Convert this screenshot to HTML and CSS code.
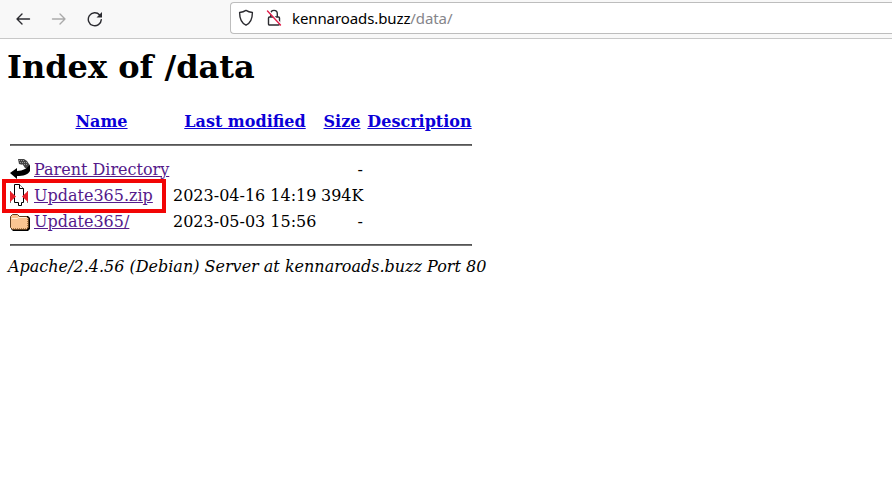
FILE: index.html
```html
<!DOCTYPE html>
<html lang="en">
<head>
<meta charset="utf-8">
<title>Index of /data</title>
<link rel="stylesheet" href="styles.css">
</head>
<body>
<header class="toolbar">
  <nav class="nav-buttons">
    <svg width="16" height="16" viewBox="0 0 16 16"><path d="M14.500 8H2M7 3 2 8l5 5"/></svg>
    <svg class="disabled" width="16" height="16" viewBox="0 0 16 16"><path d="M1.500 8H14M9 3l5 5-5 5"/></svg>
    <svg width="16" height="16" viewBox="0 0 16 16"><path d="M14.300 8.600A6.500 6.500 0 1 1 12.700 4"/><path class="solid" d="M15 1v5.500H9.500z"/></svg>
  </nav>
  <div class="address">
    <svg width="16" height="18" viewBox="0 0 16 18"><path d="M8 1.400c2 1.400 4 1.900 6.400 2.100 0 6.500-1.500 10.400-6.400 12.700C3.100 13.900 1.600 10 1.600 3.500 4 3.300 6 2.800 8 1.400z"/></svg>
    <svg class="lock" width="16" height="18" viewBox="0 0 16 18"><path d="M4.700 8V4.700a3.300 3.300 0 0 1 6.600 0V8M3.500 8h9a1 1 0 0 1 1 1v6a1 1 0 0 1-1 1h-9a1 1 0 0 1-1-1V9a1 1 0 0 1 1-1z"/><path class="halo" d="M2.500 1.500 15 15"/><path class="slash" d="M1.500 2 14.500 16"/></svg>
    <span class="url">kennaroads.buzz<span class="path">/data/</span></span>
  </div>
</header>
<main>
  <h1>Index of /data</h1>
  <table>
    <colgroup><col class="c-icon"><col class="c-name"><col class="c-date"><col class="c-size"><col class="c-desc"></colgroup>
    <tr class="head"><th></th><th><a href="#">Name</a></th><th><a href="#">Last modified</a></th><th><a href="#">Size</a></th><th><a href="#">Description</a></th></tr>
    <tr><th colspan="5"><hr></th></tr>
    <tr>
      <td><svg width="20" height="22" viewBox="0 0 20 22"><path fill="#444" d="M8 1h6l3 2 2 3v4h-4l-2-3-4-1z"/><path stroke="#999" stroke-dasharray="1 1" d="M9 2.500h5M10 4.500h7M12 6.500h6"/><path fill="#000" d="M0 15l7-5v3c6 0 11-3 13-7v7c-2 4-7 5-13 5v3z"/></svg></td>
      <td><a class="visited" href="#">Parent Directory</a></td><td></td><td class="size">-</td><td></td>
    </tr>
    <tr>
      <td class="marked"><svg width="20" height="22" viewBox="0 0 20 22"><path fill="#fff" stroke="#000" d="M4.500.5h5l4 4v14h-2v3h-3v-3h-4z"/><path fill="#fff" stroke="#000" d="M9.500.5v4h4"/><path fill="#777" d="M0 7h1v12H0zM17 7h1v12h-1z"/><path fill="#e82028" d="M0 7v11l6-5.500zM18 7v11l-6-5.500z"/></svg></td>
      <td><a class="visited" href="#">Update365.zip</a></td><td>2023-04-16 14:19</td><td class="size">394K</td><td></td>
    </tr>
    <tr>
      <td><svg width="20" height="22" viewBox="0 0 20 22"><path fill="#000" d="M2 6h16l2 2v11l-2 2H3l-2-2z"/><path fill="#f9c592" stroke="#604020" d="M.5 6.500l2-2h5l2 2h7l2 2v9l-2 2h-14l-2-2z"/><path stroke="#fff0d8" d="M1.500 8.500h6l1-1h8"/><path stroke="#a87848" stroke-dasharray="1 1" d="M17.500 9v9M3 18.500h14"/></svg></td>
      <td><a class="visited" href="#">Update365/</a></td><td>2023-05-03 15:56</td><td class="size">-</td><td></td>
    </tr>
    <tr><th colspan="5"><hr></th></tr>
  </table>
  <address>Apache/2.4.56 (Debian) Server at kennaroads.buzz Port 80</address>
</main>
</body>
</html>
```
FILE: styles.css
```css
body {
  margin: 0;
  background: #fff;
  color: #000;
  font: 16px/19px "DejaVu Serif", serif;
  overflow: hidden;
}
.toolbar {
  box-sizing: border-box;
  display: flex;
  height: 39px;
  padding: 2px 0 4px 15px;
  background: #f8f8f8;
  border-bottom: 1px solid #c8c8c8;
}
.toolbar svg {
  flex: none;
  fill: none;
  stroke: #2b2b30;
  stroke-width: 1.4;
  stroke-linecap: round;
  stroke-linejoin: round;
}
.nav-buttons {
  display: flex;
  align-items: center;
  gap: 20px;
  width: 215px;
  padding-top: 1px;
}
.toolbar .disabled { stroke: #aaa; }
.toolbar .solid { fill: #2b2b30; stroke: none; }
.address {
  box-sizing: border-box;
  display: flex;
  align-items: center;
  flex: 1;
  height: 32px;
  padding-left: 7px;
  background: #fff;
  border: 1px solid #bdbdbd;
  border-right: 0;
  border-radius: 4px 0 0 4px;
}
.lock { margin-left: 12px; }
.toolbar .halo { stroke: #fff; }
.toolbar .slash { stroke: #e2204c; }
.url {
  margin-left: 10px;
  font: 15px/20px "Noto Sans", sans-serif;
  letter-spacing: -0.1px;
  white-space: nowrap;
}
.path { color: #85858a; }
main { padding: 9px 7px; }
h1 {
  margin: 0 0 21px;
  font-size: 32px;
  line-height: 38px;
}
table {
  width: 468px;
  table-layout: fixed;
  border-spacing: 2px;
}
.c-icon { width: 22px; }
.c-name { width: 137px; }
.c-date { width: 146px; }
.c-size { width: 44px; }
.c-desc { width: 107px; }
th, td {
  padding: 1px;
  white-space: nowrap;
}
td {
  height: 22px;
  text-align: left;
}
td svg { display: block; fill: none; }
.head th { height: 22px; }
hr {
  box-sizing: border-box;
  height: 2px;
  margin: 8px 0;
  border: 1px solid #555;
  border-bottom-color: #777;
}
a { color: #0b00d8; }
.visited { color: #551a8b; }
.size { text-align: right; }
.marked { position: relative; }
.marked::after {
  content: "";
  position: absolute;
  top: -4px;
  left: -7px;
  box-sizing: border-box;
  width: 164px;
  height: 34px;
  border: 4px solid #f20505;
}
address {
  padding-left: 1px;
  line-height: 19px;
}
```
